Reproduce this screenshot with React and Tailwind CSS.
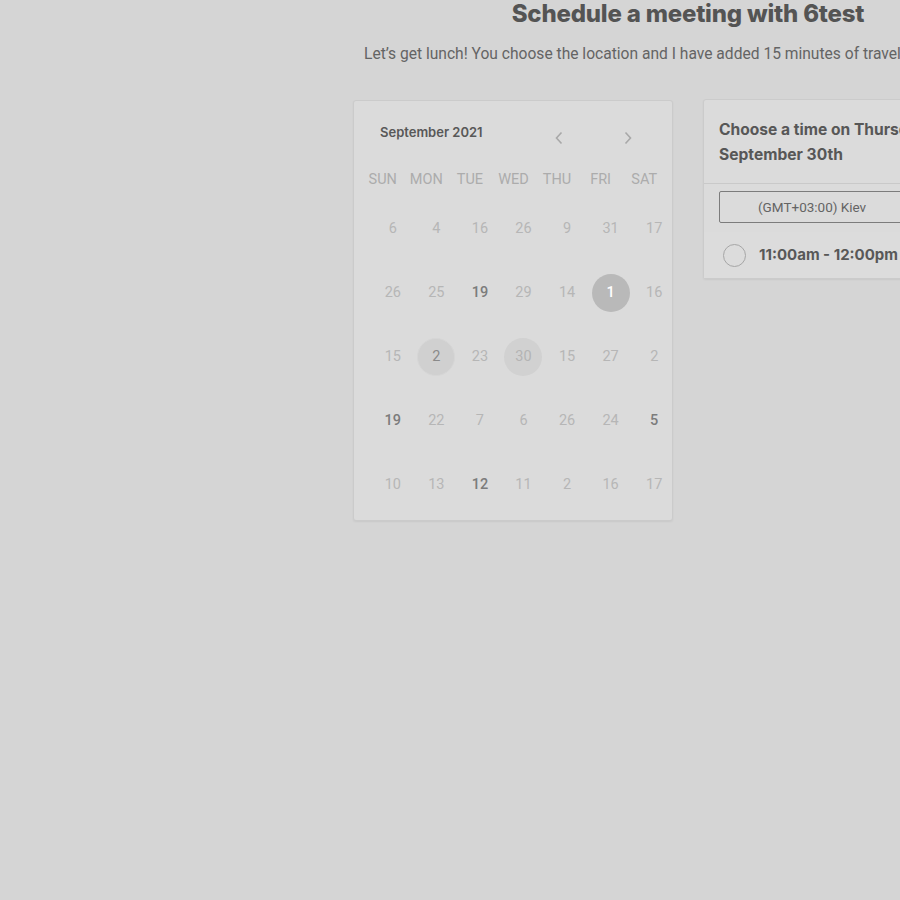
import React from "react";

const rows = [
  [["6"], ["4"], ["16"], ["26"], ["9"], ["31"], ["17"]],
  [["26"], ["25"], ["19", "b"], ["29"], ["14"], ["1", "sel"], ["16"]],
  [["15"], ["2", "c2"], ["23"], ["30", "c3"], ["15"], ["27"], ["2"]],
  [["19", "b"], ["22"], ["7"], ["6"], ["26"], ["24"], ["5", "b"]],
  [["10"], ["13"], ["12", "b"], ["11"], ["2"], ["16"], ["17"]],
];

function Day({ v, k }) {
  if (k === "sel")
    return (
      <div className="w-[38px] h-[38px] rounded-full bg-[#b9b9b9] flex items-center justify-center text-white font-medium">
        {v}
      </div>
    );
  if (k === "c2")
    return (
      <div className="w-[38px] h-[38px] rounded-full bg-[#d0d0d0] border border-[#d6d6d6] flex items-center justify-center text-[#8a8a8a]">
        {v}
      </div>
    );
  if (k === "c3")
    return (
      <div className="w-[38px] h-[38px] rounded-full bg-[#d1d1d1] flex items-center justify-center text-[#b4b4b4]">
        {v}
      </div>
    );
  if (k === "b") return <span className="text-[#7c7c7c] font-medium">{v}</span>;
  return <span className="text-[#b6b6b6]">{v}</span>;
}

export default function App() {
  return (
    <div
      className="w-[900px] h-[900px] overflow-hidden bg-[#d5d5d5]"
      style={{ fontFamily: "Roboto, 'Liberation Sans', sans-serif" }}
    >
      <div className="ml-[353px] w-[670px]">
        <h1
          className="text-center text-[24px] leading-[27px] font-extrabold text-[#545454] tracking-[-0.2px]"
          style={{ fontFamily: "Inter, sans-serif" }}
        >
          Schedule a meeting with 6test
        </h1>
        <p className="mt-[17px] pl-[11px] text-left text-[15.6px] leading-[20px] text-[#646464] whitespace-nowrap">
          Let’s get lunch! You choose the location and I have added 15 minutes of travel time each way.
        </p>
        <div className="mt-[35px] flex gap-[30px] items-start">
          <div className="w-[320px] h-[421px] mt-px bg-[#dbdbdb] border border-[#cbcbcb] rounded-[3px] shadow-[0_1px_2px_rgba(0,0,0,0.06)] px-[7px]">
            <div className="flex items-center h-[60px] pt-[14px]">
              <div
                className="pl-[19px] text-[13px] font-semibold text-[#585858] -mt-[10px]"
                style={{ fontFamily: "Inter, sans-serif" }}
              >
                September 2021
              </div>
              <div className="ml-auto flex items-center gap-[59px] pr-[32px]">
                <svg width="10" height="14" viewBox="0 0 10 14" fill="none">
                  <path d="M7.5 1.5 L2.5 7 L7.5 12.5" stroke="#a8a8a8" strokeWidth="1.6" />
                </svg>
                <svg width="10" height="14" viewBox="0 0 10 14" fill="none">
                  <path d="M2.5 1.5 L7.5 7 L2.5 12.5" stroke="#a8a8a8" strokeWidth="1.6" />
                </svg>
              </div>
            </div>
            <div className="grid grid-cols-7 w-[305px] text-[14.5px] text-[#acacac] h-[37px] items-center pt-[1px]">
              {["SUN", "MON", "TUE", "WED", "THU", "FRI", "SAT"].map((d) => (
                <div key={d} className="text-center">
                  {d}
                </div>
              ))}
            </div>
            <div className="pl-[10px] w-[315px] -mt-[1px]">
              {rows.map((r, i) => (
                <div key={i} className="grid grid-cols-7 h-[64px] items-center text-[14.5px]">
                  {r.map(([v, k], j) => (
                    <div key={j} className="flex items-center justify-center">
                      <Day v={v} k={k} />
                    </div>
                  ))}
                </div>
              ))}
            </div>
          </div>
          <div className="w-[320px] shrink-0 bg-[#dbdbdb] border border-[#cbcbcb] rounded-[3px] shadow-[0_1px_2px_rgba(0,0,0,0.06)]">
            <div
              className="px-[15px] pt-[17px] pb-[16px] text-[15.6px] leading-[25px] font-bold text-[#575757] border-b border-[#c9c9c9]"
              style={{ fontFamily: "Inter, sans-serif" }}
            >
              Choose a time on Thursday,
              <br />
              September 30th
            </div>
            <div className="px-[15px] pt-[7px] pb-[9px]">
              <div className="h-[32px] border border-[#7c7c7c] rounded-[2px] flex items-center pl-[38px] text-[13.5px] text-[#646464]">
                (GMT+03:00) Kiev
              </div>
            </div>
            <div className="h-[46px] flex items-center px-[19px] bg-[#dcdcdc]">
              <div className="w-[23px] h-[23px] rounded-full border-[1.5px] border-[#a6a6a6]" />
              <div
                className="ml-[13px] text-[15px] font-bold text-[#585858]"
                style={{ fontFamily: "Inter, sans-serif" }}
              >
                11:00am - 12:00pm
              </div>
            </div>
          </div>
        </div>
      </div>
    </div>
  );
}
